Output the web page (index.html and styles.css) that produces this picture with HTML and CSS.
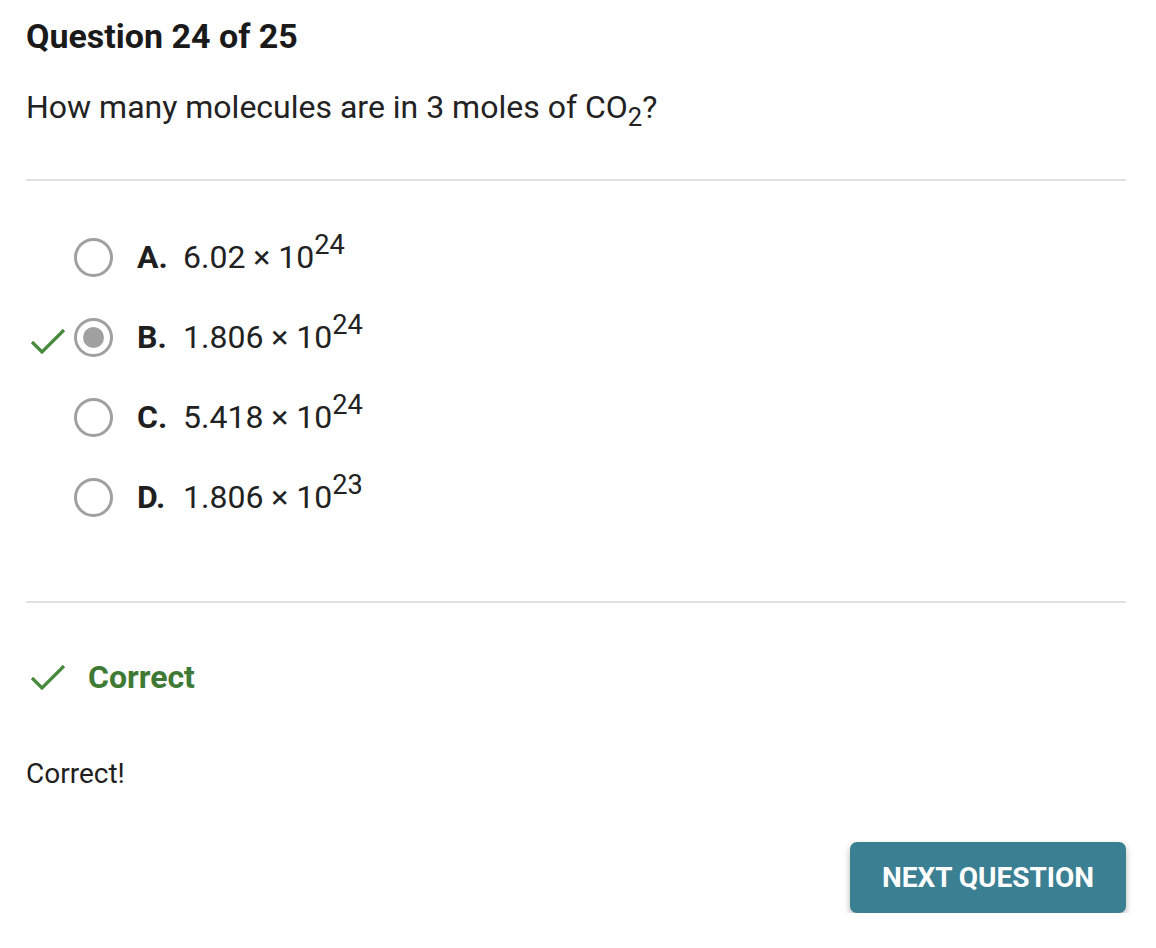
FILE: index.html
```html
<!DOCTYPE html>
<html>
<head>
<meta charset="utf-8">
<link rel="stylesheet" href="styles.css">
</head>
<body>
<div class="page">
  <h1 class="title">Question 24 of 25</h1>
  <p class="prompt">How many molecules are in 3 moles of CO<sub>2</sub>?</p>
  <hr class="rule">
  <ul class="options">
    <li class="option">
      <span class="mark"></span>
      <span class="radio"></span>
      <span class="letter">A.</span>
      <span class="value">6.02 × 10<sup>24</sup></span>
    </li>
    <li class="option">
      <span class="mark"><svg viewBox="0 0 36 28" width="36" height="28"><path d="M2 15 L12 25 L34 3" fill="none" stroke="#4a8a3f" stroke-width="3.2"/></svg></span>
      <span class="radio checked"></span>
      <span class="letter">B.</span>
      <span class="value">1.806 × 10<sup>24</sup></span>
    </li>
    <li class="option">
      <span class="mark"></span>
      <span class="radio"></span>
      <span class="letter">C.</span>
      <span class="value">5.418 × 10<sup>24</sup></span>
    </li>
    <li class="option">
      <span class="mark"></span>
      <span class="radio"></span>
      <span class="letter">D.</span>
      <span class="value">1.806 × 10<sup>23</sup></span>
    </li>
  </ul>
  <hr class="rule rule-bottom">
  <div class="result">
    <svg viewBox="0 0 36 28" width="36" height="28"><path d="M2 15 L12 25 L34 3" fill="none" stroke="#4a8a3f" stroke-width="3.2"/></svg>
    <span class="result-text">Correct</span>
  </div>
  <p class="feedback">Correct!</p>
  <div class="actions">
    <button class="next">NEXT QUESTION</button>
  </div>
</div>
</body>
</html>
```
FILE: styles.css
```css
html, body {
  margin: 0;
  padding: 0;
  background: #ffffff;
}
body {
  font-family: Roboto, "Liberation Sans", Arial, sans-serif;
  color: #1f1f1f;
}
.page {
  padding: 12px 30px 0 26px;
}
.title {
  margin: 0;
  font-size: 34px;
  font-weight: 700;
  line-height: 48px;
  color: #1a1a1a;
}
.prompt {
  margin: 26px 0 0 0;
  font-size: 32px;
  line-height: 42px;
  color: #222;
}
.prompt sub {
  font-size: 0.8em;
  line-height: 0;
  vertical-align: -0.3em;
}
.rule {
  border: none;
  border-top: 2px solid #e0e0e0;
  margin: 51px 0 0 0;
}
.options {
  list-style: none;
  margin: 0;
  padding: 36px 0 0 0;
}
.option {
  display: flex;
  align-items: center;
  height: 80px;
}
.mark {
  width: 48px;
  display: flex;
  align-items: center;
  margin-top: 8px;
}
.mark svg {
  margin-left: 4px;
}
.radio {
  box-sizing: border-box;
  width: 39px;
  height: 39px;
  border: 3px solid #a0a0a0;
  border-radius: 50%;
  display: flex;
  align-items: center;
  justify-content: center;
  flex-shrink: 0;
}
.radio.checked::after {
  content: "";
  width: 21px;
  height: 21px;
  border-radius: 50%;
  background: #a0a0a0;
}
.letter {
  font-weight: 700;
  font-size: 32px;
  margin-left: 24px;
  width: 46px;
  color: #1f1f1f;
}
.value {
  font-size: 32px;
  color: #222;
}
.value sup {
  font-size: 0.85em;
  line-height: 0;
  vertical-align: 0.5em;
}
.rule-bottom {
  margin-top: 64px;
}
.result {
  display: flex;
  align-items: center;
  margin-top: 55px;
  padding-left: 4px;
}
.result svg {
  margin-right: 22px;
}
.result-text {
  font-size: 32px;
  font-weight: 700;
  color: #3f7a35;
}
.feedback {
  margin: 62px 0 0 0;
  font-size: 28px;
  line-height: 32px;
  color: #1f1f1f;
}
.actions {
  display: flex;
  justify-content: flex-end;
  margin-top: 52px;
}
.next {
  width: 276px;
  height: 71px;
  border: none;
  border-radius: 7px;
  background: #3b7f93;
  color: #ffffff;
  font-family: Roboto, "Liberation Sans", Arial, sans-serif;
  font-size: 28px;
  font-weight: 700;
  box-shadow: 0 3px 6px rgba(0,0,0,0.3);
}
```
